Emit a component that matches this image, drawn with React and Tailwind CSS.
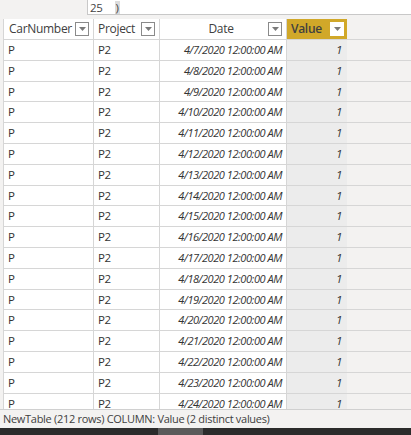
import React from "react";

const cols = ["w-[91px]", "w-[66px]", "w-[127px]", "w-[60px]"];

function FilterBox({ light }) {
  return (
    <span
      className={`ml-auto flex h-[14px] w-[14px] shrink-0 items-center justify-center border ${
        light ? "border-white bg-white" : "border-[#8a8a8a] bg-white"
      }`}
    >
      <svg width="7" height="4" viewBox="0 0 7 4">
        <path d="M0 0 L7 0 L3.5 4 Z" fill="#7a7a7a" />
      </svg>
    </span>
  );
}

export default function App() {
  const days = Array.from({ length: 18 }, (_, i) => 7 + i);

  return (
    <div
      className="relative flex h-[435px] w-[411px] flex-col overflow-hidden whitespace-nowrap bg-[#f3f2f1] text-[11.5px] tracking-[-0.3px] text-[#333]"
      style={{ fontFamily: '"Open Sans", "Noto Sans", sans-serif' }}
    >
      {/* Formula bar */}
      <div className="flex h-[15px] shrink-0">
        <div className="w-[87px] bg-[#f3f2f1]" />
        <div className="flex flex-1 items-end border-b border-l border-[#c8c8c8] bg-white pl-[2px] leading-[13px] text-[#444]">
          <span>25</span>
          <span className="ml-[12px] bg-[#dcdcdc] px-[1px]">)</span>
        </div>
      </div>

      <div className="h-[4px] shrink-0" />

      {/* Table */}
      <div className="flex-1 overflow-hidden pl-[3px]">
        <div className="flex h-[21px] border-b border-[#d6d6d6] text-[12px] font-medium text-[#404040]">
          <div className={`${cols[0]} flex items-center border-r border-l border-[#d6d6d6] bg-white pl-[5px] pr-[4px]`}>
            <span>CarNumber</span>
            <FilterBox />
          </div>
          <div className={`${cols[1]} flex items-center border-r border-[#d6d6d6] bg-white pl-[4px] pr-[4px]`}>
            <span>Project</span>
            <FilterBox />
          </div>
          <div className={`${cols[2]} flex items-center border-r border-[#d6d6d6] bg-white pr-[4px]`}>
            <span className="flex-1 pl-[14px] text-center">Date</span>
            <FilterBox />
          </div>
          <div className={`${cols[3]} flex items-center bg-[#d1a829] pl-[4px] pr-[3px] font-semibold`}>
            <span>Value</span>
            <FilterBox light />
          </div>
        </div>

        {days.map((d) => (
          <div key={d} className="flex h-[20.8px] border-b border-[#d6d6d6] leading-[20px]">
            <div className={`${cols[0]} border-r border-l border-[#d6d6d6] bg-white pl-[4px]`}>P</div>
            <div className={`${cols[1]} border-r border-[#d6d6d6] bg-white pl-[4px]`}>P2</div>
            <div className={`${cols[2]} overflow-hidden border-r border-[#d6d6d6] bg-white pr-[4px] text-right text-[11px] tracking-[-0.45px] italic`}>
              4/{d}/2020 12:00:00 AM
            </div>
            <div className={`${cols[3]} bg-[#ececec] pr-[5px] text-right italic`}>1</div>
          </div>
        ))}
      </div>

      {/* Status bar */}
      <div className="flex h-[19px] shrink-0 items-center border-t border-[#d0d0d0] bg-[#f3f2f1] pl-[3px] text-[11px] text-[#404040]">
        NewTable (212 rows) COLUMN: Value (2 distinct values)
      </div>

      {/* Taskbar strip */}
      <div className="flex h-[7px] shrink-0 bg-[#2b2b2b]">
        <div className="w-[158px]" />
        <div className="w-[45px] bg-[#5a5a5a]" />
      </div>
    </div>
  );
}
